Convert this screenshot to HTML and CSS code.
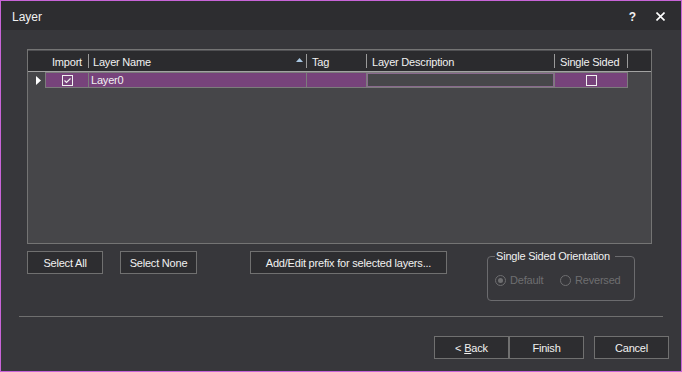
FILE: index.html
```html
<!DOCTYPE html>
<html>
<head>
<meta charset="utf-8">
<title>Layer</title>
<link rel="stylesheet" href="styles.css">
</head>
<body>
<div class="window">
  <div class="titlebar">
    <span class="title">Layer</span>
    <span class="help">?</span>
    <svg class="close" width="9" height="9" viewBox="0 0 9 9"><path d="M0.5 0.5 L8.5 8.5 M8.5 0.5 L0.5 8.5" stroke="#ffffff" stroke-width="1.6" fill="none"/></svg>
  </div>
  <div class="content">
    <div class="grid">
      <div class="ghead">
        <div class="hc c-rh"></div>
        <div class="hc c-imp sep center">Import</div>
        <div class="hc c-name sep name-h"><span>Layer Name</span><svg class="sort" width="7" height="4" viewBox="0 0 7 4"><path d="M0 4 L3.5 0 L7 4 Z" fill="#a9c7e2"/></svg></div>
        <div class="hc c-tag sep">Tag</div>
        <div class="hc c-desc sep">Layer Description</div>
        <div class="hc c-single sep">Single Sided</div>
        <div class="hc c-rest"></div>
      </div>
      <div class="grow">
        <div class="rc c-rh rowhead"><svg width="5" height="9" viewBox="0 0 5 9"><path d="M0 0 L5 4.5 L0 9 Z" fill="#ffffff"/></svg></div>
        <div class="rc c-imp cell first center"><svg width="11" height="11" viewBox="0 0 11 11"><rect x="0.5" y="0.5" width="10" height="10" fill="none" stroke="#f0f0f0"/><path d="M2.5 5.5 L4.5 7.5 L8.5 3.5" stroke="#f0f0f0" stroke-width="1.2" fill="none"/></svg></div>
        <div class="rc c-name cell">Layer0</div>
        <div class="rc c-tag cell"></div>
        <div class="rc c-desc cell current"></div>
        <div class="rc c-single cell center"><svg width="11" height="11" viewBox="0 0 11 11"><rect x="0.5" y="0.5" width="10" height="10" fill="none" stroke="#f0f0f0"/></svg></div>
      </div>
    </div>
    <div class="actions">
      <button class="btn b-all">Select All</button>
      <button class="btn b-none">Select None</button>
      <button class="btn b-prefix">Add/Edit prefix for selected layers...</button>
      <fieldset class="group">
        <legend>Single Sided Orientation</legend>
        <div class="radios">
          <label class="radio r-default"><span class="dot on"></span>Default</label>
          <label class="radio"><span class="dot"></span>Reversed</label>
        </div>
      </fieldset>
    </div>
    <div class="separator"></div>
    <div class="footer">
      <button class="btn fbtn">&lt; <u>B</u>ack</button>
      <button class="btn fbtn">Finish</button>
      <button class="btn fbtn cancel">Cancel</button>
    </div>
  </div>
</div>
</body>
</html>
```
FILE: styles.css
```css
* { box-sizing: border-box; }
body {
  margin: 0;
  background: #37373b;
  font-family: "Liberation Sans", Arial, sans-serif;
  font-size: 11px;
  letter-spacing: -0.2px;
  color: #f1f1f1;
}
.window {
  width: 682px;
  height: 372px;
  border: 1px solid #c864d8;
  background: #37373b;
  display: flex;
  flex-direction: column;
}
.titlebar {
  height: 29px;
  flex: none;
  background: #2d2d30;
  display: flex;
  align-items: center;
  padding: 2px 0 0 11px;
}
.title { flex: 1; font-size: 12px; letter-spacing: 0; }
.help { font-size: 12px; font-weight: bold; margin-right: 20px; letter-spacing: 0; }
.close { margin-right: 16px; }
.content {
  flex: 1;
  display: flex;
  flex-direction: column;
  padding: 19px 0 0 26px;
}
.grid {
  width: 625px;
  height: 195px;
  border: 1px solid #747474;
  background: #464649;
}
.ghead {
  display: flex;
  height: 22px;
  background: #2b2b2e;
  border-top: 1px solid #505053;
  border-bottom: 1px solid #a3a3a3;
}
.hc {
  display: flex;
  align-items: center;
  padding-left: 5px;
  padding-top: 1px;
  white-space: nowrap;
}
.sep {
  background: linear-gradient(#9a9a9a, #9a9a9a) right center / 1px 14px no-repeat;
}
.center { justify-content: center; padding-left: 0; }
.name-h { padding-left: 4px; padding-right: 4px; justify-content: space-between; }
.sort { margin-bottom: 3px; }
.c-rh { width: 17px; }
.c-imp { width: 44px; }
.c-name { width: 218px; }
.c-tag { width: 60px; }
.c-desc { width: 188px; }
.c-single { width: 73px; }
.c-rest { flex: 1; }
.grow { display: flex; height: 16px; }
.rc { display: flex; align-items: center; }
.rowhead { justify-content: center; padding-left: 3px; }
.cell {
  background: #77437b;
  border-top: 1px solid #7c7c7c;
  border-bottom: 1px solid #7c7c7c;
  border-right: 1px solid #7c7c7c;
  padding-left: 2px;
}
.cell.first { border-left: 1px solid #7c7c7c; padding-left: 0; }
.cell.center { justify-content: center; padding-left: 0; }
.cell.current {
  background: #47474a;
  box-shadow: inset 0 0 0 1px #8a6a8e;
}
.actions {
  display: flex;
  align-items: flex-start;
  height: 50px;
  margin-top: 7px;
}
.btn {
  height: 23px;
  border: 1px solid #707070;
  background: #2d2d30;
  color: #f1f1f1;
  font: inherit;
  letter-spacing: inherit;
  padding: 0;
}
.b-all { width: 76px; }
.b-none { width: 77px; margin-left: 17px; }
.b-prefix { width: 197px; margin-left: 53px; }
.group {
  margin: -2px 0 0 40px;
  width: 148px;
  height: 52px;
  border: 1px solid #6b6b6e;
  border-radius: 4px;
  padding: 0 0 0 7px;
}
.group legend {
  padding: 0 5px 0 1px;
  line-height: 14px;
  font-size: 11px;
  color: #f1f1f1;
}
.radios { display: flex; margin-top: 10px; color: #6e6e70; }
.radio { display: flex; align-items: center; gap: 4px; height: 14px; }
.r-default { width: 65px; }
.dot {
  width: 11px;
  height: 11px;
  border: 1px solid #6e6e70;
  border-radius: 50%;
  display: flex;
  align-items: center;
  justify-content: center;
}
.dot.on::after {
  content: "";
  width: 5px;
  height: 5px;
  border-radius: 50%;
  background: #6e6e70;
}
.separator {
  width: 644px;
  height: 1px;
  margin: 15px 0 0 -8px;
  background: #6f6f6f;
}
.footer {
  display: flex;
  justify-content: flex-end;
  margin-top: 19px;
  padding-right: 12px;
}
.fbtn { width: 75px; }
.cancel { margin-left: 10px; }
```
